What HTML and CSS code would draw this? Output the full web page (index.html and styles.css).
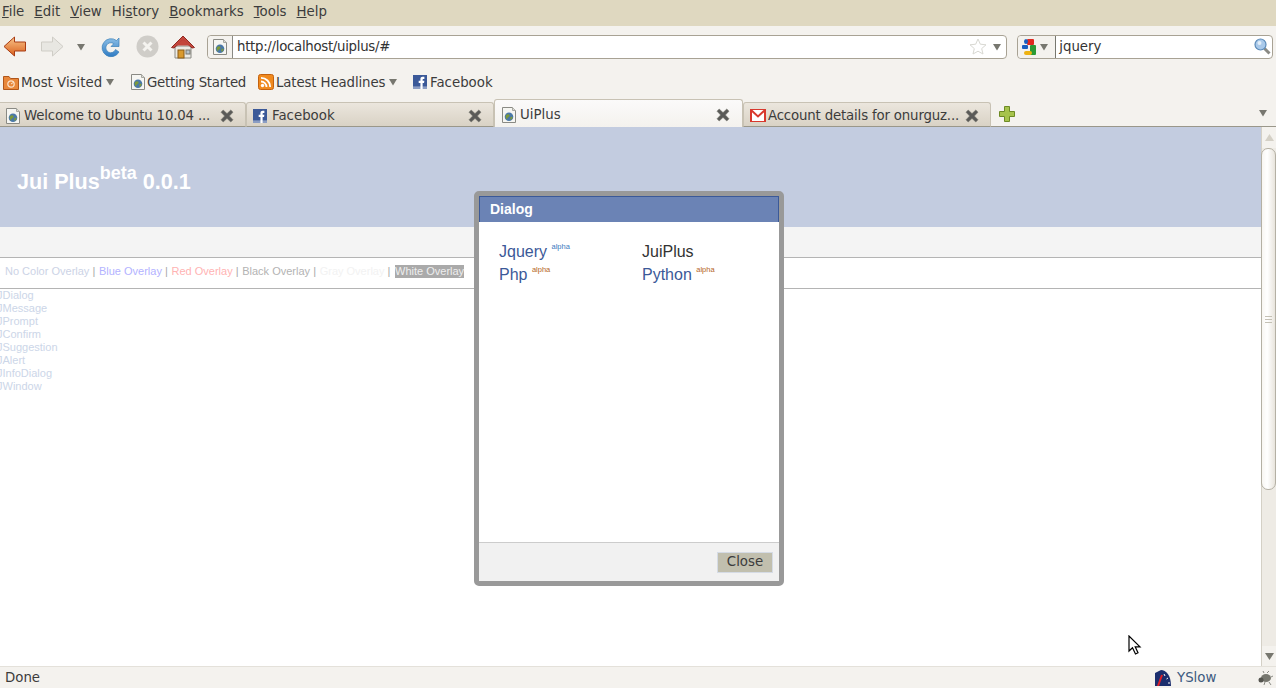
FILE: index.html
```html
<!DOCTYPE html>
<html lang="en">
<head>
<meta charset="utf-8">
<title>UiPlus</title>
<link rel="stylesheet" href="styles.css">
</head>
<body>
<svg class="defs" width="0" height="0">
  <defs>
    <symbol id="page" viewBox="0 0 16 16">
      <path d="M1.500 .5H11.500L14.500 3.500V15.500H1.500Z" fill="#f6f6f2" stroke="#8a8a84"/>
      <path d="M11.500 .5V3.500H14.500" fill="#dcdcd6" stroke="#a8a8a0"/>
      <circle cx="8" cy="9.800" r="4.300" fill="#4a78a8"/>
      <path d="M4.500 9C6 6.500 8 7 8.500 8S8 10 7 10.500 6 13 5.500 12.500ZM9.500 10C11 9.500 12.300 10 11 11.800S9 13 9.500 10Z" fill="#7d9a3a"/>
    </symbol>
    <symbol id="fb" viewBox="0 0 16 16">
      <rect width="16" height="16" fill="#3b5998"/>
      <rect y="13" width="16" height="3" fill="#8b9dc3"/>
      <path d="M8.500 16V9H6.500V6.500H8.500V4.500C8.500 2.800 9.500 2 11 2H13V4.500H11.700C11.100 4.500 11 4.800 11 5.300V6.500H13L12.600 9H11V16Z" fill="#fff"/>
    </symbol>
    <symbol id="x" viewBox="0 0 14 14">
      <path d="M3.200 1L7 4.600 10.800 1 13 3.200 9.400 7 13 10.800 10.800 13 7 9.400 3.200 13 1 10.800 4.600 7 1 3.200Z" fill="#5a5a58" stroke="#77776f" stroke-width=".6"/>
    </symbol>
    <symbol id="drop" viewBox="0 0 8 8">
      <path d="M0 1H8L4 7.500Z" fill="#77776f"/>
    </symbol>
  </defs>
</svg>
<div class="browser">
  <nav class="menubar">
    <span class="menu"><u>F</u>ile</span>
    <span class="menu"><u>E</u>dit</span>
    <span class="menu"><u>V</u>iew</span>
    <span class="menu">Hi<u>s</u>tory</span>
    <span class="menu"><u>B</u>ookmarks</span>
    <span class="menu"><u>T</u>ools</span>
    <span class="menu"><u>H</u>elp</span>
  </nav>

  <div class="navbar">
    <svg class="nav-back" width="24" height="22" viewBox="0 0 24 22">
      <defs><linearGradient id="gb" x1="0" y1="0" x2="0" y2="1"><stop offset="0" stop-color="#f9c58a"/><stop offset="1" stop-color="#d9601c"/></linearGradient></defs>
      <path d="M1 10.500L11.500 1V6H22.500V15H11.500V20Z" fill="url(#gb)" stroke="#a83c14"/>
    </svg>
    <svg class="nav-fwd" width="24" height="22" viewBox="0 0 24 22">
      <path d="M23 10.500L12.500 1V6H1.500V15H12.500V20Z" fill="#e8e7e2" stroke="#cfcdc6"/>
    </svg>
    <svg class="nav-drop" width="8" height="8"><use href="#drop"/></svg>
    <svg class="nav-reload" width="24" height="24" viewBox="0 0 24 24">
      <defs><linearGradient id="gr" x1="0" y1="0" x2="0" y2="1"><stop offset="0" stop-color="#8cbfe6"/><stop offset="1" stop-color="#2f7cc4"/></linearGradient></defs>
      <path d="M19 17A9 9 0 1 1 16.500 5.500L19 3V11.500H11L13.800 8.700A5 5 0 1 0 15.500 14.500Z" fill="url(#gr)" stroke="#3a7fb8" stroke-width=".7"/>
    </svg>
    <svg class="nav-stop" width="23" height="23" viewBox="0 0 23 23">
      <circle cx="11.500" cy="11.500" r="11" fill="#cfcdc8"/>
      <path d="M7.500 7.500L15.500 15.500M15.500 7.500L7.500 15.500" stroke="#f4f3ef" stroke-width="3"/>
    </svg>
    <svg class="nav-home" width="24" height="24" viewBox="0 0 24 24">
      <path d="M4 11H20V23H4Z" fill="#ecebe5" stroke="#8a8a84"/>
      <path d="M.5 12.500L12 1 23.500 12.500 21 13 12 5 3 13Z" fill="#c4463c" stroke="#8f2a22"/>
      <path d="M12 4.500L5 10.500H19Z" fill="#c4463c"/>
      <rect x="7" y="15" width="6" height="8" fill="#d99a2e" stroke="#8a5a14"/>
      <rect x="15" y="15" width="4" height="4" fill="#b8c4cc" stroke="#77776f"/>
    </svg>
    <div class="urlbar">
      <span class="url-icon"><svg width="16" height="16"><use href="#page"/></svg></span>
      <span class="url-text">http://localhost/uiplus/#</span>
      <svg class="url-star" width="18" height="17" viewBox="0 0 18 17">
        <path d="M9 1L11.300 6.200 17 6.800 12.700 10.600 14 16 9 13.200 4 16 5.300 10.600 1 6.800 6.700 6.200Z" fill="#fff" stroke="#d8d8d2"/>
      </svg>
      <svg width="8" height="8"><use href="#drop"/></svg>
    </div>
    <div class="searchbar">
      <span class="search-engine">
        <svg width="16" height="18" viewBox="0 0 16 18">
          <rect x="6" y="1" width="7" height="6" rx="1" fill="#e02a20"/>
          <rect x="9" y="7" width="6" height="10" rx="1" fill="#2a9a35"/>
          <rect x="3" y="13" width="8" height="4" rx="2" fill="#eeb211"/>
          <ellipse cx="5" cy="3.500" rx="2" ry="2.500" fill="#1a5fc0"/>
          <rect x="1" y="7" width="6" height="4" rx="1" fill="#1a5fc0"/>
        </svg>
        <svg width="8" height="8"><use href="#drop"/></svg>
      </span>
      <span class="search-text">jquery</span>
      <svg width="17" height="17" viewBox="0 0 17 17">
        <path d="M10.500 10.500L15.500 15.500" stroke="#8a8a84" stroke-width="3"/>
        <circle cx="6.500" cy="6.500" r="5.500" fill="#a9c9ea" stroke="#5a8ab8" stroke-width="1.200"/>
        <circle cx="5.500" cy="5" r="2" fill="#e2eef9"/>
      </svg>
    </div>
  </div>

  <div class="bookmarks">
    <span class="bm bm-most">
      <svg width="16" height="16" viewBox="0 0 16 16">
        <path d="M.5 2.500H6L7.500 4.500H15.500V15.500H.5Z" fill="#e8873a" stroke="#b0561a"/>
        <circle cx="8" cy="10" r="3.200" fill="none" stroke="#fbe3cc" stroke-width="1.200"/>
        <path d="M8 10L11 8" stroke="#fbe3cc"/>
      </svg>
      Most Visited
      <svg class="bm-drop" width="8" height="8"><use href="#drop"/></svg>
    </span>
    <span class="bm bm-start"><svg width="16" height="16"><use href="#page"/></svg>Getting Started</span>
    <span class="bm bm-news">
      <svg width="16" height="16" viewBox="0 0 16 16">
        <rect x=".5" y=".5" width="15" height="15" rx="2" fill="#f08a1e" stroke="#c4620e"/>
        <circle cx="4.500" cy="11.500" r="1.700" fill="#fff"/>
        <path d="M3 7.500A5.500 5.500 0 0 1 8.500 13M3 3.800A9.200 9.200 0 0 1 12.200 13" fill="none" stroke="#fff" stroke-width="1.800"/>
      </svg>
      Latest Headlines
      <svg class="bm-drop" width="8" height="8"><use href="#drop"/></svg>
    </span>
    <span class="bm bm-fb"><svg width="14" height="14"><use href="#fb"/></svg>Facebook</span>
  </div>

  <div class="tabstrip">
    <div class="tab tab-first">
      <svg class="tab-icon" width="16" height="16"><use href="#page"/></svg>
      <span class="tab-label">Welcome to Ubuntu 10.04 ...</span>
      <svg class="tab-x" width="14" height="14"><use href="#x"/></svg>
    </div>
    <div class="tab tab-fb">
      <svg class="tab-icon" width="14" height="14"><use href="#fb"/></svg>
      <span class="tab-label">Facebook</span>
      <svg class="tab-x" width="14" height="14"><use href="#x"/></svg>
    </div>
    <div class="tab tab-active">
      <svg class="tab-icon" width="16" height="16"><use href="#page"/></svg>
      <span class="tab-label">UiPlus</span>
      <svg class="tab-x" width="14" height="14"><use href="#x"/></svg>
    </div>
    <div class="tab tab-last">
      <svg class="tab-icon" width="16" height="13" viewBox="0 0 16 13">
        <rect x=".5" y=".5" width="15" height="12" fill="#fff" stroke="#d8392e"/>
        <path d="M1 1L8 7.500 15 1" fill="none" stroke="#d8392e" stroke-width="2"/>
        <path d="M1 1V12M15 1V12" stroke="#d8392e" stroke-width="2"/>
      </svg>
      <span class="tab-label">Account details for onurguz...</span>
      <svg class="tab-x" width="14" height="14"><use href="#x"/></svg>
    </div>
    <svg class="tab-new" width="16" height="16" viewBox="0 0 16 16">
      <path d="M5.500 .5H10.500V5.500H15.500V10.500H10.500V15.500H5.500V10.500H.5V5.500H5.500Z" fill="#a6c34c" stroke="#6d8a24"/>
    </svg>
    <svg class="tab-list" width="8" height="8"><use href="#drop"/></svg>
  </div>

  <div class="viewport">
    <main class="page">
      <header class="page-head">
        <h1 class="page-title">Jui Plus<sup class="page-beta">beta</sup> 0.0.1</h1>
      </header>
      <div class="page-gap"></div>
      <div class="overlays">
        <a class="ov ov-none">No Color Overlay</a><span class="sep"> | </span><a class="ov ov-blue">Blue Overlay</a><span class="sep"> | </span><a class="ov ov-red">Red Overlay</a><span class="sep"> | </span><a class="ov ov-black">Black Overlay</a><span class="sep"> | </span><a class="ov ov-gray">Gray Overlay</a><span class="sep"> | </span><a class="ov ov-white">White Overlay</a>
      </div>
      <ul class="samples">
        <li>JDialog</li>
        <li>JMessage</li>
        <li>JPrompt</li>
        <li>JConfirm</li>
        <li>JSuggestion</li>
        <li>JAlert</li>
        <li>JInfoDialog</li>
        <li>JWindow</li>
      </ul>
    </main>
    <aside class="scrollbar">
      <div class="sb-btn"><svg width="9" height="7" viewBox="0 0 9 7"><path d="M4.500 0L9 7H0Z" fill="#d4d0c6"/></svg></div>
      <div class="sb-thumb"><span class="grip"></span><span class="grip"></span><span class="grip"></span></div>
      <div class="sb-btn sb-btn-down"><svg width="9" height="7" viewBox="0 0 9 7"><path d="M0 0H9L4.500 7Z" fill="#77776f"/></svg></div>
    </aside>
    <section class="dialog">
      <div class="dialog-title">Dialog</div>
      <div class="dialog-body">
        <div class="links">
          <div class="link">Jquery <sup class="tag tag-blue">alpha</sup></div>
          <div class="link link-dark">JuiPlus</div>
          <div class="link">Php <sup class="tag">alpha</sup></div>
          <div class="link">Python <sup class="tag">alpha</sup></div>
        </div>
      </div>
      <div class="dialog-foot"><button class="close-btn">Close</button></div>
    </section>
    <svg class="cursor" width="14" height="20" viewBox="0 0 14 20">
      <path d="M1 1V16L4.500 12.700 7.500 19 10 17.800 7.200 11.800H12Z" fill="#fff" stroke="#000" stroke-width="1.200"/>
    </svg>
  </div>

  <footer class="statusbar">
    <span class="status-text">Done</span>
    <svg class="status-gauge" width="16" height="16" viewBox="0 0 16 16">
      <path d="M0 16V3L6 0C11 0 16 5 16 16Z" fill="#1c2f6e"/>
      <path d="M3 16L7 5" stroke="#e0202a" stroke-width="2"/>
      <path d="M9 4L10 6M13 8L11.500 9M15 13H13" stroke="#fff"/>
    </svg>
    <span class="status-yslow">YSlow</span>
    <svg class="status-bug" width="16" height="14" viewBox="0 0 16 14">
      <ellipse cx="9" cy="7" rx="5" ry="4" fill="#77776f"/>
      <circle cx="4" cy="9" r="2.500" fill="#55554f"/>
      <path d="M7 2L6 0M10 2L12 0M12 11L14 14M8 11L7 14M14 6L16 5" stroke="#8a8a84"/>
    </svg>
  </footer>
</div>
</body>
</html>
```

FILE: styles.css
```css
* { box-sizing: border-box; }
html, body { margin: 0; height: 100%; overflow: hidden; }
body { font-family: "DejaVu Sans", sans-serif; font-size: 13.33px; color: #3c3c3c; background: #f4f2ee; }
.defs { position: absolute; }
svg { display: block; flex: none; }

.browser { width: 1276px; height: 688px; display: flex; flex-direction: column; overflow: hidden; }

.menubar { height: 26px; background: #dfd8c0; display: flex; align-items: center; padding: 0 0 4px 2px; gap: 10px; flex: none; }
.menu { color: #3c3c3c; }

.navbar { height: 41px; background: #f4f2ee; display: flex; align-items: center; padding: 0 3px 0 3px; flex: none; }
.nav-back { margin-right: 13px; }
.nav-fwd { margin-right: 13px; }
.nav-drop { margin-right: 15px; }
.nav-reload { margin-right: 12px; }
.nav-stop { margin-right: 12px; }
.nav-home { margin-right: 12px; }
.urlbar { width: 801px; height: 24px; background: #fff; border: 1px solid #a8a294; border-radius: 4px; display: flex; align-items: center; padding-right: 4px; margin-right: 10px; }
.url-icon { width: 25px; height: 22px; display: flex; align-items: center; justify-content: center; border-right: 1px solid #8a8a84; background: #f4f2ee; border-radius: 4px 0 0 4px; margin-right: 4px; }
.url-text { flex: 1; color: #333; letter-spacing: -.3px; }
.url-star { margin-right: 3px; }
.urlbar > svg:last-child { margin: 0 1px 0 3px; }
.searchbar { width: 256px; height: 24px; background: #fff; border: 1px solid #a8a294; border-radius: 4px; display: flex; align-items: center; padding-right: 1px; }
.search-engine { width: 38px; height: 22px; display: flex; align-items: center; gap: 3px; padding-left: 3px; background: #f4f2ee; border-right: 1px solid #77776f; border-radius: 4px 0 0 4px; margin-right: 3px; }
.search-text { flex: 1; color: #333; }

.bookmarks { height: 32px; background: #f4f2ee; display: flex; align-items: center; flex: none; padding-bottom: 2px; }
.bm { display: flex; align-items: center; gap: 2px; }
.bm-most { margin-left: 3px; width: 127px; }
.bm-start { width: 128px; gap: 1px; letter-spacing: -.27px; }
.bm-news { width: 155px; letter-spacing: -.12px; }
.bm-fb { gap: 3px; }
.bm-drop { margin-left: 2px; }

.tabstrip { height: 28px; background: #f4f2ee; display: flex; align-items: flex-end; border-bottom: 1px solid #9a978a; flex: none; position: relative; }
.tab { width: 248px; height: 25px; margin-bottom: -1px; display: flex; align-items: center; padding: 2px 11px 0 6px; background: linear-gradient(#ebe6dd, #d9d2c5); border: 1px solid #c8c2b4; border-bottom-color: #9a978a; border-radius: 3px 3px 0 0; }
.tab-first { width: 246px; padding-left: 5px; border-left: 0; border-radius: 0 3px 0 0; }
.tab-first .tab-label { letter-spacing: -.18px; }
.tab-active { width: 249px; height: 28px; padding-right: 12px; background: linear-gradient(#fbfafa, #f4f2ee); border-bottom: 0; margin-bottom: -1px; }
.tab-last { margin-right: 8px; }
.tab-icon { margin-right: 3px; }
.tab-fb .tab-icon { margin-right: 5px; }
.tab-last .tab-icon { margin-right: 2px; }
.tab-last .tab-label { letter-spacing: -.17px; }
.tab-label { flex: 1; white-space: nowrap; overflow: hidden; color: #3c3c3c; }
.tab-new { margin-bottom: 4px; }
.tab-list { margin: 0 9px 9px auto; }

.viewport { flex: 1; display: flex; position: relative; background: #fff; min-height: 0; }
.page { flex: 1; min-width: 0; font-family: "Liberation Sans", sans-serif; }
.page-head { height: 100px; background: #c3cce0; display: flex; align-items: center; padding: 10px 0 0 17px; }
.page-title { margin: 0; font-size: 21.6px; font-weight: bold; color: #fff; line-height: 1; }
.page-beta { font-size: 18px; vertical-align: baseline; position: relative; top: -10px; line-height: 0; }
.page-gap { height: 30px; background: #f4f4f4; }
.overlays { height: 32px; border-top: 1px solid #b4b4b4; border-bottom: 1px solid #b4b4b4; display: flex; align-items: center; padding: 0 0 4px 5px; font-size: 11px; white-space: pre; background: #fff; }
.sep { color: #a8a8a8; margin-right: .6px; }
.ov-none { color: #ccd3e6; }
.ov-blue { color: #b3b3ff; }
.ov-red { color: #ffb3b3; }
.ov-black { color: #b3b3b3; }
.ov-gray { color: #f2f2f2; }
.ov-white { color: #eee; background: #aaa; margin-left: 1px; line-height: 13px; }
.samples { list-style: none; margin: 0 0 0 -3px; padding: 0; font-size: 11px; line-height: 13px; color: #ccd6e8; }

.scrollbar { width: 15px; background: #eeebe5; display: flex; flex-direction: column; border-left: 1px solid #d4d0c6; }
.sb-btn { height: 21px; display: flex; justify-content: center; align-items: center; background: #f4f2ee; flex: none; }
.sb-btn-down { margin-top: auto; height: 20px; }
.sb-thumb { height: 342px; border: 1px solid #b4b0a4; border-radius: 7px; background: linear-gradient(90deg, #f8f6f2, #fff 40%, #e8e4dc); margin: 0 0 0 -1px; display: flex; flex-direction: column; justify-content: center; align-items: center; gap: 2px; }
.grip { width: 7px; height: 1px; background: #c4c0b4; }

.dialog { position: absolute; left: 474px; top: 64px; width: 310px; height: 395px; border: 5px solid #999; border-radius: 5px; display: flex; flex-direction: column; background: #fff; font-family: "Liberation Sans", sans-serif; }
.dialog-title { height: 26px; background: #6b83b5; border: 1px solid #3b5998; border-bottom: 0; color: #fff; font-size: 14px; font-weight: bold; display: flex; align-items: center; padding: 0 0 2px 10px; flex: none; }
.dialog-body { flex: 1; padding: 18px 20px; }
.links { display: grid; grid-template-columns: 143px 1fr; grid-auto-rows: 23px; font-size: 16px; }
.link { color: #3b5998; white-space: nowrap; line-height: 23px; }
.link-dark { color: #333; }
.tag { font-size: 7.5px; color: #b5651d; vertical-align: baseline; position: relative; top: -8px; line-height: 0; }
.tag-blue { color: #3b7bc0; }
.dialog-foot { height: 39px; background: #f1f1f1; border-top: 1px solid #ccc; display: flex; justify-content: flex-end; align-items: center; padding: 0 6px 0 0; flex: none; }
.close-btn { width: 56px; height: 21px; background: #c1bfae; border: 1px solid #d5dbe5; color: #3c3c3c; font-family: "DejaVu Sans", sans-serif; font-size: 13.33px; padding: 0 0 2px; }

.cursor { position: absolute; left: 1128px; top: 508px; }

.statusbar { height: 22px; background: #f4f2ee; border-top: 1px solid #e4e1da; display: flex; align-items: center; padding: 0 3px 0 5px; flex: none; }
.status-text { flex: 1; }
.status-gauge { margin-right: 6px; }
.status-yslow { width: 80px; color: #3c5a80; }
```
